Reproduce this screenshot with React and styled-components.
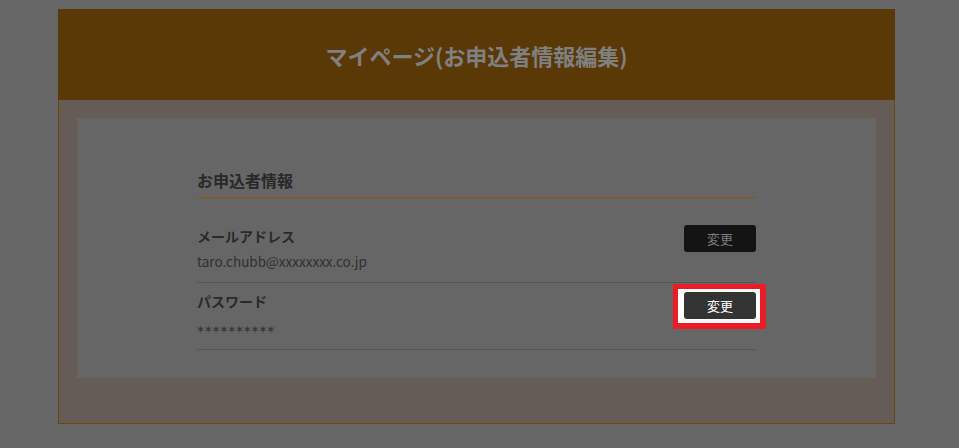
import React from "react";
import styled, { createGlobalStyle } from "styled-components";

const Global = createGlobalStyle`
  html, body { margin: 0; padding: 0; background: #666666; }
  body { font-family: "Noto Sans CJK JP", "Noto Sans", sans-serif; }
`;

const Page = styled.div`
  width: 959px;
  height: 448px;
  padding-top: 9px;
  box-sizing: border-box;
  background: #666666;
  overflow: hidden;
`;

const Card = styled.div`
  width: 837px;
  margin-left: 58px;
  border: 1px solid #6e4606;
  border-top: none;
  box-sizing: border-box;
  background: #655c56;
  padding-bottom: 45px;
`;

const Header = styled.header`
  height: 91px;
  margin: 0 -1px;
  background: #5a3906;
  display: flex;
  align-items: center;
  justify-content: center;
`;

const Title = styled.h1`
  margin: 0;
  font-size: 22px;
  font-weight: 700;
  color: #808080;
  letter-spacing: 0;
`;

const Panel = styled.div`
  margin: 18px 18px 0 18px;
  background: #666666;
  height: 260px;
  box-sizing: border-box;
  padding: 51px 120px 0 120px;
`;

const SectionHeading = styled.h2`
  margin: 0 0 20px 0;
  font-size: 16px;
  line-height: 23px;
  font-weight: 700;
  color: #292929;
  padding-bottom: 5px;
  border-bottom: 1px solid #8a570a;
`;

const Row = styled.div`
  display: flex;
  justify-content: space-between;
  align-items: flex-start;
  padding: 7px 0 ${(p) => p.$pb || 12}px 0;
  border-bottom: 1px solid #555555;
`;

const Info = styled.div`
  display: flex;
  flex-direction: column;
`;

const Label = styled.div`
  font-size: 14px;
  line-height: 22px;
  font-weight: 700;
  color: #2a2a2a;
`;

const Value = styled.div`
  margin-top: 5px;
  font-size: 13.5px;
  line-height: 18px;
  color: #303030;
`;

const MaskedValue = styled.div`
  margin-top: 10px;
  font-family: "DejaVu Sans", sans-serif;
  font-size: 14px;
  line-height: 18px;
  color: #2e2e2e;
  letter-spacing: 0.8px;
`;

const ButtonSlot = styled.div`
  position: relative;
  margin-top: ${(p) => p.$mt || 0}px;
`;

const Ring = styled.span`
  position: absolute;
  top: -8px;
  left: -11px;
  right: -10px;
  bottom: -10px;
  border: 5px solid #ec1c24;
  border-bottom-width: 6px;
  border-right-width: 6px;
  background: #ffffff;
  box-sizing: border-box;
`;

const ChangeButton = styled.button`
  position: relative;
  width: 72px;
  height: 27px;
  border: none;
  border-radius: 3px;
  background: ${(p) => (p.$active ? "#333333" : "#141414")};
  color: ${(p) => (p.$active ? "#ffffff" : "#7a7a7a")};
  font-family: "Noto Sans CJK JP", sans-serif;
  font-size: 13px;
  padding: 0;
  cursor: pointer;
`;

export default function App() {
  return (
    <>
      <Global />
      <Page>
        <Card>
          <Header>
            <Title>マイページ(お申込者情報編集)</Title>
          </Header>
          <Panel>
            <SectionHeading>お申込者情報</SectionHeading>
            <Row $pb={12}>
              <Info>
                <Label>メールアドレス</Label>
                <Value>taro.chubb@xxxxxxxx.co.jp</Value>
              </Info>
              <ButtonSlot>
                <ChangeButton>変更</ChangeButton>
              </ButtonSlot>
            </Row>
            <Row $pb={9}>
              <Info>
                <Label>パスワード</Label>
                <MaskedValue>**********</MaskedValue>
              </Info>
              <ButtonSlot $mt={2}>
                <Ring />
                <ChangeButton $active>変更</ChangeButton>
              </ButtonSlot>
            </Row>
          </Panel>
        </Card>
      </Page>
    </>
  );
}
